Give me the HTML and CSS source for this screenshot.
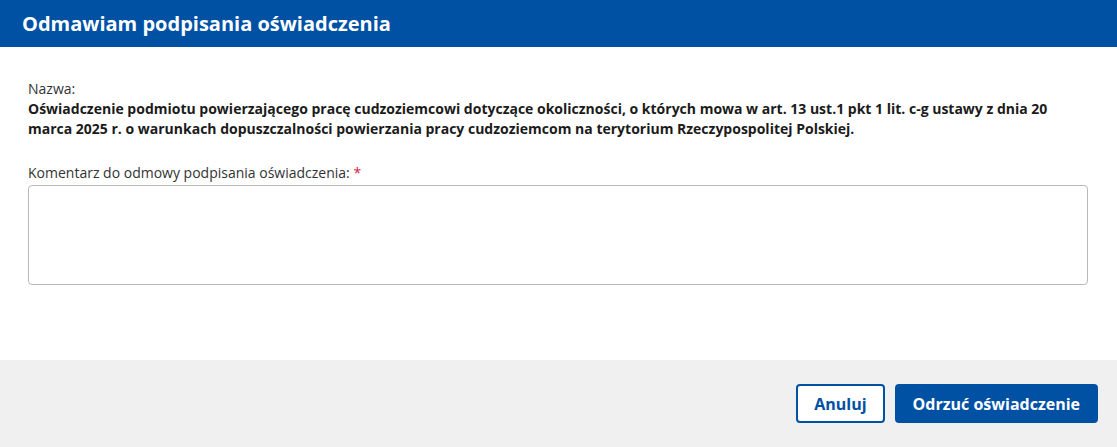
FILE: index.html
```html
<!DOCTYPE html>
<html lang="pl">
<head>
<meta charset="utf-8">
<link rel="stylesheet" href="styles.css">
</head>
<body>
<div class="dialog">
  <header class="dialog-header">
    <h1 class="dialog-title">Odmawiam podpisania oświadczenia</h1>
  </header>
  <main class="dialog-body">
    <div class="field-name">
      <div class="label">Nazwa:</div>
      <div class="name-value">Oświadczenie podmiotu powierzającego pracę cudzoziemcowi dotyczące okoliczności, o których mowa w art. 13 ust.1 pkt 1 lit. c-g ustawy z dnia 20 marca 2025 r. o warunkach dopuszczalności powierzania pracy cudzoziemcom na terytorium Rzeczypospolitej Polskiej.</div>
    </div>
    <div class="field-comment">
      <label class="label" for="comment">Komentarz do odmowy podpisania oświadczenia: <span class="req">*</span></label>
      <textarea id="comment" class="textarea"></textarea>
    </div>
  </main>
  <footer class="dialog-footer">
    <button class="btn btn-secondary">Anuluj</button>
    <button class="btn btn-primary">Odrzuć oświadczenie</button>
  </footer>
</div>
</body>
</html>
```

FILE: styles.css
```css
* { box-sizing: border-box; }
html, body { margin: 0; padding: 0; }
body {
  font-family: "Open Sans", "Liberation Sans", sans-serif;
  color: #1b1b1b;
  background: #fff;
  width: 1117px;
  height: 447px;
  overflow: hidden;
}
.dialog {
  display: flex;
  flex-direction: column;
  height: 447px;
}
.dialog-header {
  background: #0051a4;
  height: 47px;
  display: flex;
  align-items: center;
  padding: 0 22px;
  flex-shrink: 0;
}
.dialog-title {
  margin: 0;
  color: #fff;
  font-size: 20px;
  font-weight: 700;
  line-height: 27px;
}
.dialog-body {
  flex: 1;
  padding: 32px 29px 0 28px;
}
.label {
  display: block;
  font-size: 14px;
  line-height: 20px;
  color: #333;
}
.name-value {
  font-size: 14px;
  line-height: 20px;
  font-weight: 700;
  color: #1b1b1b;
}
.field-comment {
  margin-top: 24px;
}
.field-comment .label {
  margin-bottom: 2px;
}
.req { color: #d4213d; }
.textarea {
  display: block;
  width: 100%;
  height: 100px;
  border: 1px solid #b9b9b9;
  border-radius: 4px;
  resize: none;
  font-family: inherit;
  font-size: 14px;
  padding: 8px;
  margin: 0;
}
.dialog-footer {
  background: #f0f0f0;
  height: 87px;
  flex-shrink: 0;
  display: flex;
  justify-content: flex-end;
  align-items: center;
  gap: 10px;
  padding: 0 19px;
}
.btn {
  height: 39px;
  font-family: inherit;
  font-size: 16px;
  font-weight: 700;
  border-radius: 4px;
  padding: 0 16px;
  margin: 0;
  cursor: pointer;
}
.btn-secondary {
  background: #fff;
  color: #0051a4;
  border: 2px solid #0051a4;
}
.btn-primary {
  background: #0051a4;
  color: #fff;
  border: 2px solid #0051a4;
}
```
